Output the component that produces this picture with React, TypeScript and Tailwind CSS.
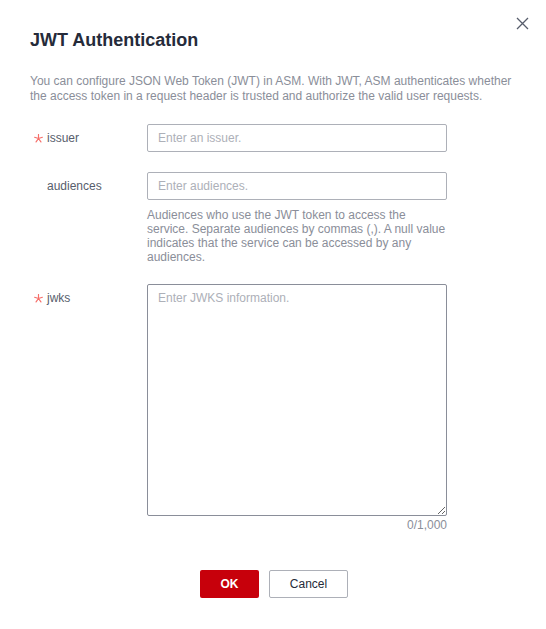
import React from 'react';

const Required = () => (
  <svg width="9" height="9" viewBox="0 0 10 10" className="mr-[4px] text-[#f66f6a]" fill="none" stroke="currentColor" strokeWidth="1.3">
    <path d="M5 5V0.5M5 5L9.3 3.6M5 5L7.7 8.8M5 5L2.3 8.8M5 5L0.7 3.6" strokeLinecap="round" />
  </svg>
);

const App: React.FC = () => {
  return (
    <div className="relative h-[629px] w-[546px] bg-white font-['Liberation_Sans',Arial,sans-serif] text-[12px] text-[#575d6c]">
      <button className="absolute right-[17px] top-[17px] text-[#575d6c]">
        <svg width="13" height="13" viewBox="0 0 13 13" fill="none" stroke="currentColor" strokeWidth="1.3">
          <path d="M1 1L12 12M12 1L1 12" />
        </svg>
      </button>

      <div className="px-[30px] pt-[28px]">
        <h1 className="text-[18px] font-bold leading-[24px] text-[#252b3a]">JWT Authentication</h1>
        <p className="mt-[22px] text-[12px] leading-[15px] text-[#8a8e99]">
          You can configure JSON Web Token (JWT) in ASM. With JWT, ASM authenticates whether the access token in a
          request header is trusted and authorize the valid user requests.
        </p>

        <div className="mt-[20px] flex flex-col">
          <div className="flex">
            <label className="flex h-[28px] w-[117px] items-center pl-[4px] text-[#575d6c]">
              <Required />
              issuer
            </label>
            <input
              className="h-[28px] w-[300px] rounded-[2px] border border-[#adb0b8] px-[10px] text-[12px] outline-none placeholder:text-[#adb0b8]"
              placeholder="Enter an issuer."
            />
          </div>

          <div className="mt-[20px] flex">
            <label className="flex h-[28px] w-[117px] items-center pl-[17px] text-[#575d6c]">audiences</label>
            <div className="w-[300px]">
              <input
                className="h-[28px] w-full rounded-[2px] border border-[#adb0b8] px-[10px] text-[12px] outline-none placeholder:text-[#adb0b8]"
                placeholder="Enter audiences."
              />
              <p className="mt-[8px] text-[12px] leading-[14px] text-[#8a8e99]">
                Audiences who use the JWT token to access the service. Separate audiences by commas (,). A null value
                indicates that the service can be accessed by any audiences.
              </p>
            </div>
          </div>

          <div className="mt-[20px] flex">
            <label className="flex h-[28px] w-[117px] items-center pl-[4px] text-[#575d6c]">
              <Required />
              jwks
            </label>
            <div className="w-[300px]">
              <textarea
                className="block h-[232px] w-full rounded-[2px] border border-[#8a8e99] px-[10px] py-[5px] text-[12px] leading-[16px] outline-none placeholder:text-[#adb0b8]"
                placeholder="Enter JWKS information."
              />
              <div className="mt-[2px] text-right text-[12px] leading-[14px] text-[#8a8e99]">0/1,000</div>
            </div>
          </div>
        </div>

        <div className="mt-[38px] flex justify-center gap-[10px] pl-[2px]">
          <button className="h-[28px] w-[59px] rounded-[2px] bg-[#c7000b] text-[12px] font-bold text-white">OK</button>
          <button className="h-[28px] w-[79px] rounded-[2px] border border-[#adb0b8] bg-white text-[12px] text-[#252b3a]">
            Cancel
          </button>
        </div>
      </div>
    </div>
  );
};

export default App;
